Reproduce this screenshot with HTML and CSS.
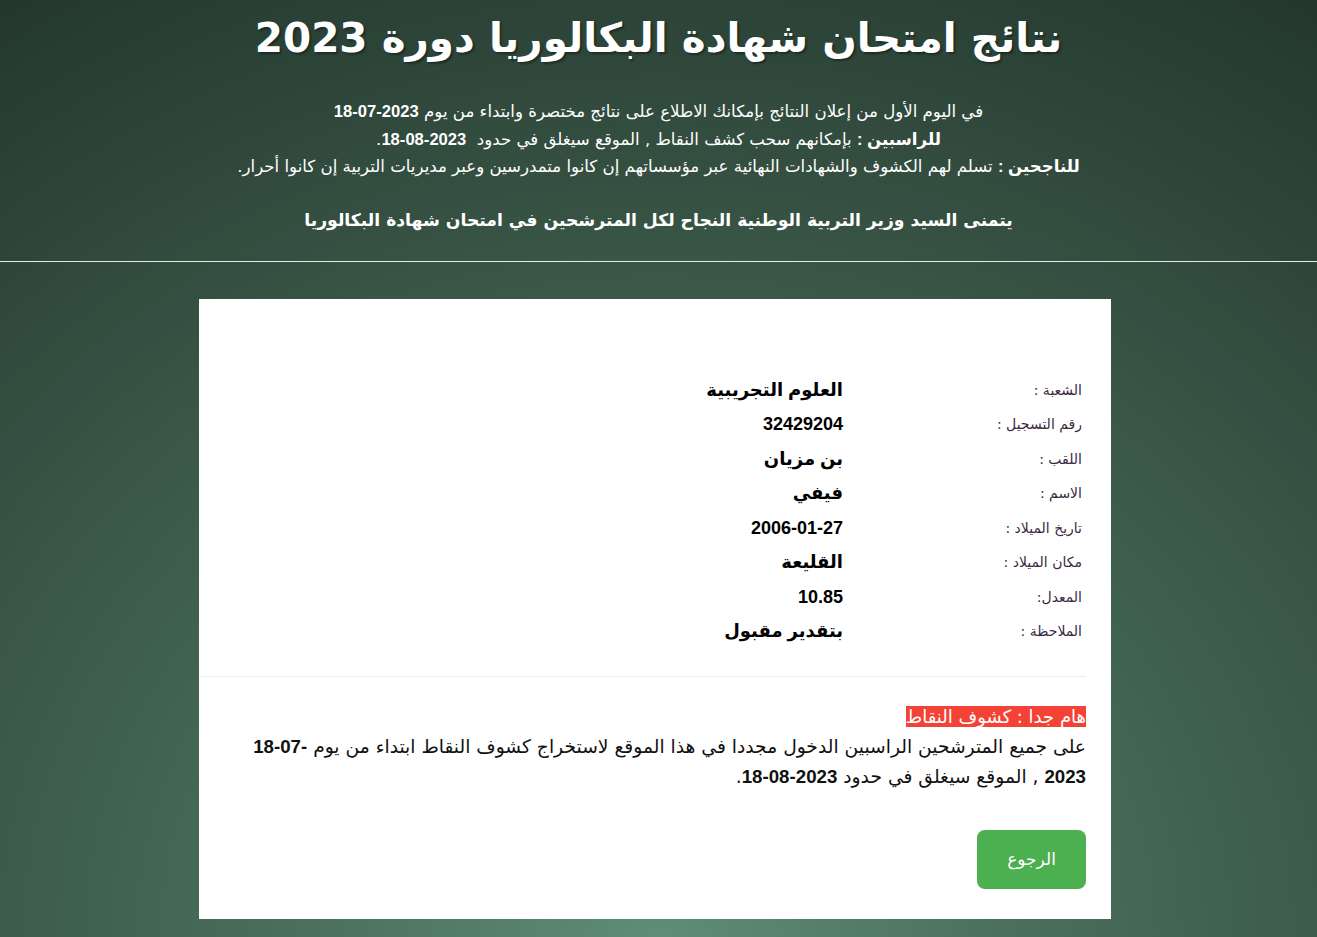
FILE: index.html
```html
<!DOCTYPE html>
<html lang="ar" dir="rtl">
<head>
<meta charset="utf-8">
<title>نتائج امتحان شهادة البكالوريا دورة 2023</title>
<link rel="stylesheet" href="styles.css">
</head>
<body>
<header class="top">
  <h1 class="title">نتائج امتحان شهادة البكالوريا دورة 2023</h1>
  <p class="info">
    في اليوم الأول من إعلان النتائج بإمكانك الاطلاع على نتائج مختصرة وابتداء من يوم <b>2023-07-18</b><br>
    <b>للراسبين :</b> بإمكانهم سحب كشف النقاط , الموقع سيغلق في حدود&nbsp; <b>2023-08-18</b>.<br>
    <b>للناجحين :</b> تسلم لهم الكشوف والشهادات النهائية عبر مؤسساتهم إن كانوا متمدرسين وعبر مديريات التربية إن كانوا أحرار.
  </p>
  <p class="wish">يتمنى السيد وزير التربية الوطنية النجاح لكل المترشحين في امتحان شهادة البكالوريا</p>
</header>
<main class="wrap">
  <section class="card">
    <div class="result">
      <div class="label">الشعبة :</div><div class="value">العلوم التجريبية</div>
      <div class="label">رقم التسجيل :</div><div class="value">32429204</div>
      <div class="label">اللقب :</div><div class="value">بن مزيان</div>
      <div class="label">الاسم :</div><div class="value">فيفي</div>
      <div class="label">تاريخ الميلاد :</div><div class="value">2006-01-27</div>
      <div class="label">مكان الميلاد :</div><div class="value">القليعة</div>
      <div class="label">المعدل:</div><div class="value">10.85</div>
      <div class="label">الملاحظة :</div><div class="value">بتقدير مقبول</div>
    </div>
    <hr class="sep">
    <p class="note"><span class="alert">هام جدا : كشوف النقاط</span><br>على جميع المترشحين الراسبين الدخول مجددا في هذا الموقع لاستخراج كشوف النقاط ابتداء من يوم <b>-07-18<br>2023</b> , الموقع سيغلق في حدود <b>2023-08-18</b>.</p>
    <div class="actions"><a class="btn" href="#">الرجوع</a></div>
  </section>
</main>
</body>
</html>
```
FILE: styles.css
```css
html, body {
  margin: 0;
  padding: 0;
}
body {
  min-height: 937px;
  font-family: "DejaVu Sans", sans-serif;
  background: radial-gradient(ellipse 1200px 1100px at 50% 100%, #5f8d75 0%, #4a6f5d 30%, #3a5747 60%, #24382f 100%);
  color: #fff;
}
.top {
  text-align: center;
  padding: 12px 0 27px;
  border-bottom: 1px solid #e4ece6;
}
.title {
  margin: 0;
  font-size: 40.5px;
  line-height: 53px;
  font-weight: bold;
  color: #fff;
  text-shadow: 2px 2px 2px rgba(0,0,0,0.35);
}
.info {
  margin: 33px 0 0;
  font-size: 16.6px;
  line-height: 27.5px;
}
.info b {
  font-family: "Liberation Sans", "DejaVu Sans", sans-serif;
}
.wish {
  margin: 25px 0 0;
  font-size: 17.2px;
  line-height: 28px;
  font-weight: bold;
}
.wrap {
  display: flex;
  justify-content: center;
  padding: 37px 7px 19px 0;
}
.card {
  width: 912px;
  box-sizing: border-box;
  background: #fff;
  color: #000;
  padding: 74px 25px 30px;
}
.result {
  display: grid;
  grid-template-columns: 243px auto;
  line-height: 34.5px;
}
.label {
  font-size: 14px;
  color: #3a2a40;
  padding-right: 4px;
}
.value {
  font-family: "Liberation Sans", "DejaVu Sans", sans-serif;
  font-size: 18px;
  font-weight: bold;
  color: #000;
}
.sep {
  border: 0;
  border-top: 1px solid #eee;
  margin: 27px 0 0 -25px;
}
.note {
  margin: 25px 0 0;
  font-size: 18.7px;
  line-height: 30px;
  color: #111;
}
.note b {
  font-family: "Liberation Sans", sans-serif;
}
.alert {
  background: #f44336;
  color: #fff;
  font-size: 18px;
  line-height: 20px;
}
.actions {
  margin-top: 38px;
  display: flex;
}
.btn {
  display: flex;
  align-items: center;
  justify-content: center;
  width: 109px;
  height: 59px;
  border-radius: 8px;
  background: #4caf50;
  color: #fff;
  font-size: 17px;
  text-decoration: none;
}
```
